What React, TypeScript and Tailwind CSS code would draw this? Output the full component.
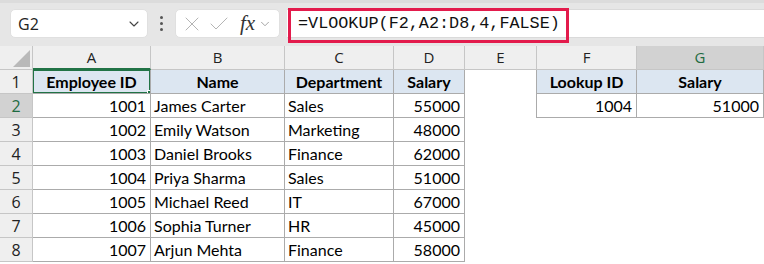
import {ChevronDown, X, Check} from 'lucide-react';

const cols = ['A', 'B', 'C', 'D', 'E', 'F', 'G'];

const employees = [
  ['1001', 'James Carter', 'Sales', '55000'],
  ['1002', 'Emily Watson', 'Marketing', '48000'],
  ['1003', 'Daniel Brooks', 'Finance', '62000'],
  ['1004', 'Priya Sharma', 'Sales', '51000'],
  ['1005', 'Michael Reed', 'IT', '67000'],
  ['1006', 'Sophia Turner', 'HR', '45000'],
  ['1007', 'Arjun Mehta', 'Finance', '58000'],
];

const grid = 'grid grid-cols-[33px_118px_134px_109px_71px_72px_100px_127px]';
const cell = 'h-[24px] flex items-center overflow-hidden whitespace-nowrap';
const tb = 'border-r border-b border-[#ababab]';

function Toolbar() {
  return (
    <div className="h-[46px] bg-[#e6e6e6] flex items-start pt-[9px] pl-[10px] font-['Open_Sans',sans-serif] border-t-[3px] border-[#dcdcdc]">
      <div className="w-[138px] h-[29px] -mt-[3px] rounded-[5px] bg-white flex items-center justify-between pl-[7px] pr-[5px] border border-[#e0e0e0]">
        <span className="text-[16px] text-[#222]">G2</span>
        <ChevronDown size={16} strokeWidth={1.6} className="text-[#444]" />
      </div>
      <div className="w-[27px] h-[29px] -mt-[3px] flex flex-col items-center justify-center gap-[3px]">
        <span className="w-[3px] h-[3px] bg-[#555] rounded-full" />
        <span className="w-[3px] h-[3px] bg-[#555] rounded-full" />
        <span className="w-[3px] h-[3px] bg-[#555] rounded-full" />
      </div>
      <div className="w-[105px] h-[29px] -mt-[3px] rounded-[5px] bg-white flex items-center pl-[4px] border border-[#e0e0e0]">
        <X size={24} strokeWidth={1} className="text-[#b4b4b4]" />
        <Check size={24} strokeWidth={1} className="text-[#b4b4b4] ml-[3px]" />
        <span className="ml-[9px] font-['Liberation_Serif',serif] italic text-[21px] text-[#333] leading-none">fx</span>
        <ChevronDown size={14} strokeWidth={1.3} className="text-[#888] ml-[3px]" />
      </div>
      <div className="relative flex-1 h-[29px] -mt-[3px] ml-[7px] bg-white border-y border-[#dadada] flex items-center pl-[11px]">
        <span className="font-['Liberation_Mono',monospace] text-[16.8px] text-[#111]">=VLOOKUP(F2,A2:D8,4,FALSE)</span>
        <div className="absolute left-[1px] top-[-2px] w-[281px] h-[35px] border-[3px] border-[#e31b4c]" />
      </div>
    </div>
  );
}

function Header() {
  return (
    <div className={`${grid} bg-[#efefef] font-['Open_Sans',sans-serif] text-[15px] text-[#222]`}>
      <div className="h-[24px] border-r border-b border-[#c6c6c6] flex items-end justify-end pr-[2px] pb-[2px]">
        <div className="w-0 h-0 border-l-[17px] border-l-transparent border-b-[17px] border-b-[#b9b9b9]" />
      </div>
      {cols.map((c) => {
        const sel = c === 'G';
        const a = c === 'A';
        return (
          <div
            key={c}
            className={`h-[24px] flex items-center justify-center border-r border-[#c6c6c6] ${
              sel ? 'bg-[#d2d2d2] text-[#1e6b41] border-b border-b-[#c6c6c6]' : ''
            } ${a ? 'border-b-2 border-b-[#217346]' : 'border-b'}`}
          >
            {c}
          </div>
        );
      })}
    </div>
  );
}

function RowHead({n}: {n: number}) {
  const sel = n === 2;
  return (
    <div
      className={`${cell} justify-center font-['Open_Sans',sans-serif] text-[16px] border-r border-b border-[#c6c6c6] ${
        sel ? 'bg-[#d2d2d2] text-[#1e6b41]' : 'bg-[#efefef] text-[#222]'
      }`}
    >
      {n}
    </div>
  );
}

export default function App() {
  return (
    <div className="w-[764px] h-[264px] overflow-hidden bg-white">
      <Toolbar />
      <Header />
      <div className="font-['Lato',sans-serif] text-[16px] text-black">
        <div className={grid}>
          <RowHead n={1} />
          <div className={`${cell} relative justify-center font-bold bg-[#dce6f1] ${tb}`}>
            Employee ID
            <div className="absolute inset-[-1px] border-2 border-[#217346]" />
            <div className="absolute right-[-3px] bottom-[-3px] w-[6px] h-[6px] bg-[#217346] border border-white" />
          </div>
          <div className={`${cell} justify-center font-bold bg-[#dce6f1] ${tb}`}>Name</div>
          <div className={`${cell} justify-center font-bold bg-[#dce6f1] ${tb}`}>Department</div>
          <div className={`${cell} justify-center font-bold bg-[#dce6f1] ${tb}`}>Salary</div>
          <div className={`${cell} border-r border-[#ababab]`} />
          <div className={`${cell} justify-center font-bold bg-[#dce6f1] ${tb}`}>Lookup ID</div>
          <div className={`${cell} justify-center font-bold bg-[#dce6f1] ${tb}`}>Salary</div>
        </div>
        {employees.map((e, i) => (
          <div key={e[0]} className={grid}>
            <RowHead n={i + 2} />
            <div className={`${cell} justify-end pr-[4px] ${tb}`}>{e[0]}</div>
            <div className={`${cell} pl-[3px] ${tb}`}>{e[1]}</div>
            <div className={`${cell} pl-[3px] ${tb}`}>{e[2]}</div>
            <div className={`${cell} justify-end pr-[4px] ${tb}`}>{e[3]}</div>
            {i === 0 ? (
              <>
                <div className={`${cell} border-r border-[#ababab]`} />
                <div className={`${cell} justify-end pr-[4px] ${tb}`}>1004</div>
                <div className={`${cell} justify-end pr-[4px] ${tb}`}>51000</div>
              </>
            ) : (
              <>
                <div className={cell} />
                <div className={cell} />
                <div className={cell} />
              </>
            )}
          </div>
        ))}
      </div>
    </div>
  );
}
